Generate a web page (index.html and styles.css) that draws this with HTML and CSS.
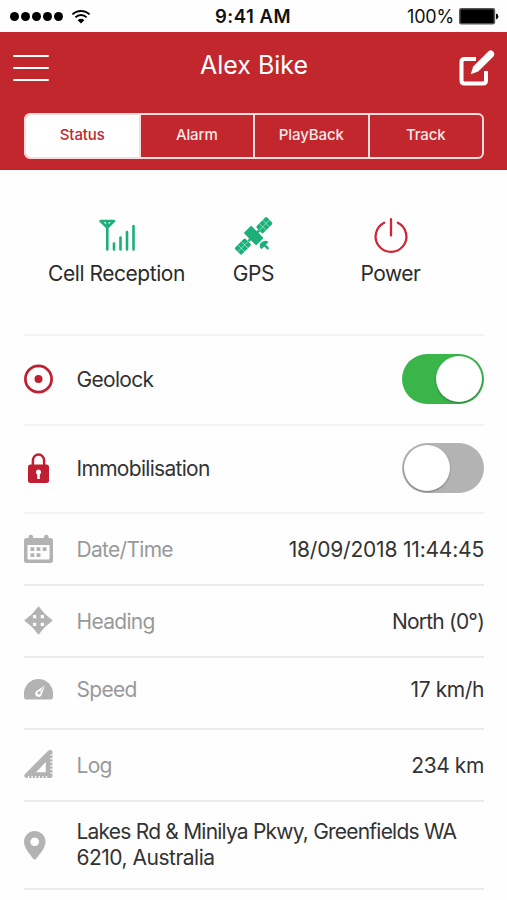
FILE: index.html
```html
<!DOCTYPE html>
<html lang="en">
<head>
    <meta charset="UTF-8">
    <meta name="viewport" content="width=device-width, initial-scale=1.0">
    <title>Alex Bike - Status</title>
    <link rel="stylesheet" href="styles.css">
</head>
<body>
    <div class="statusbar">
        <div class="signal">
            <i></i><i></i><i></i><i></i><i></i>
            <svg class="wifi" width="20" height="15" viewBox="0 0 20 15">
                <path d="M1.4 5.4a12.3 12.3 0 0 1 17.2 0M4.4 8.4a8 8 0 0 1 11.2 0" fill="none" stroke="#000" stroke-width="2"/>
                <path d="M6.7 11.2a4.7 4.7 0 0 1 6.6 0L10 14.6z"/>
            </svg>
        </div>
        <div class="clock">9:41 AM</div>
        <div class="battery">
            <span>100%</span>
            <svg width="40" height="17" viewBox="0 0 40 17">
                <rect x=".8" y=".8" width="34.6" height="15" rx="1.5" fill="#000" stroke="#555" stroke-width="1.6"/>
                <path d="M37 5.6q2.4.7 2.4 2.9T37 11.4z"/>
            </svg>
        </div>
    </div>

    <div class="header">
        <div class="navbar">
            <div class="menu"><span></span><span></span><span></span></div>
            <h1>Alex Bike</h1>
            <svg class="edit" width="36" height="36" viewBox="0 0 36 36">
                <path d="M17 9H5.5Q2.5 9 2.5 12V30.5Q2.5 33.5 5.5 33.5H24Q27 33.5 27 30.5V21" fill="none" stroke="#fff" stroke-width="4"/>
                <path d="M11.7 24.3L14.2 16.5L29.5 1.2Q31.8-.7 34.1 1.5Q36.4 4 34.4 6.4L19.2 21.4z" fill="#fff"/>
            </svg>
        </div>
        <div class="tabs">
            <div class="tab active">Status</div>
            <div class="tab">Alarm</div>
            <div class="tab">PlayBack</div>
            <div class="tab">Track</div>
        </div>
    </div>

    <div class="stats">
        <div class="stat">
            <svg width="36" height="36" viewBox="0 0 36 36" fill="none" stroke="#1bb077" stroke-width="2.6" stroke-linecap="round">
                <path d="M1.6 3H15L8.3 9.5zM8.3 4V31.5" stroke-width="2.6" stroke-linejoin="round"/>
                <path d="M15 25.5V31.500M21.5 19.500V31.500M28 14V31.500M34.5 8V31.500"/>
            </svg>
            <div class="cell">Cell Reception</div>
        </div>
        <div class="stat">
            <svg width="36" height="36" viewBox="0 0 36 36">
                <g transform="rotate(-45 18 17.5)">
                    <rect x="12.5" y="8.500" width="10.500" height="17.500" rx="1" fill="#1bb077"/>
                    <path d="M10 17.500H26" stroke="#1bb077" stroke-width="2.4"/>
                    <g fill="#1bb077">
                        <rect x="-5" y="12.700" width="14.700" height="9.600" rx="1.5"/>
                        <rect x="25.300" y="12.700" width="14.700" height="9.600" rx="1.5"/>
                    </g>
                    <path d="M-5 17.500H9.700M-.1 12.700V22.300M4.800 12.700V22.300M25.300 17.500H40M30.200 12.700V22.300M35.100 12.700V22.300" stroke="#fff" stroke-width=".6" stroke-opacity=".8"/>
                </g>
                <path d="M25.300 31.300Q22.200 27.500 25.300 24.500Q28.700 21.300 32.500 24L29.800 27Q32.800 28 33 30.500L31.500 31.800L28.300 28.400z" fill="#1bb077"/>
            </svg>
            <div class="gps">GPS</div>
        </div>
        <div class="stat">
            <svg width="36" height="36" viewBox="0 0 36 36" fill="none" stroke="#cf2735" stroke-width="2.3" stroke-linecap="round">
                <path d="M18 1.200V17.500M11.200 4.700A15.400 15.400 0 1 0 24.800 4.700"/>
            </svg>
            <div class="power">Power</div>
        </div>
    </div>

    <div class="list">
        <div class="row geolock">
            <svg class="icon" width="30" height="30" viewBox="0 0 30 30">
                <circle cx="14.500" cy="15" r="13.100" fill="none" stroke="#c01f32" stroke-width="2.7"/>
                <circle cx="14.500" cy="15" r="4" fill="#c01f32"/>
            </svg>
            <div class="name">Geolock</div>
            <div class="switch on"><span></span></div>
        </div>
        <div class="row immobilisation">
            <svg class="icon" width="30" height="30" viewBox="0 0 30 30">
                <path d="M8.900 12V7.500a5.600 6 0 0 1 11.200 0V12" fill="none" stroke="#c01f32" stroke-width="2.500"/>
                <rect x="4" y="11.500" width="21" height="18.500" rx="2.500" fill="#c01f32"/>
                <path d="M14.500 16.500a2.700 2.700 0 0 1 1.300 5V26h-2.600v-4.500a2.700 2.700 0 0 1 1.300-5z" fill="#fff"/>
            </svg>
            <div class="name">Immobilisation</div>
            <div class="switch"><span></span></div>
        </div>
        <div class="row muted datetime">
            <svg class="icon" width="30" height="30" viewBox="0 0 30 30" fill="#b3b3b3">
                <path fill-rule="evenodd" d="M2.500 4H4.500V3a2.300 2.300 0 0 1 4.600 0V4H20V3a2.300 2.300 0 0 1 4.600 0V4H26.500Q29 4 29 6.500V26.500Q29 29 26.500 29H2.500Q0 29 0 26.500V6.500Q0 4 2.500 4zM3.500 11V24.500Q3.500 25.500 4.500 25.500H24.500Q25.500 25.500 25.500 24.500V11z"/>
                <path d="M6.500 13.200h3.800v3.800H6.500zM12.600 13.200h3.800v3.800h-3.800zM18.700 13.200h3.800v3.800h-3.800zM6.500 19.200h3.800V23H6.500zM12.600 19.200h3.800V23h-3.800z"/>
            </svg>
            <div class="name">Date/Time</div>
            <div class="value">18/09/2018 11:44:45</div>
        </div>
        <div class="row muted heading">
            <svg class="icon" width="30" height="30" viewBox="0 0 30 30" fill="#b3b3b3">
                <path d="M14.500 .8L20.800 8.500H16.200V12.800H20.500V8.200L28.300 14.500L20.500 20.800V16.200H16.200V20.500H20.800L14.500 28.200L8.200 20.500H12.800V16.200H8.500V20.800L.7 14.500L8.500 8.200V12.800H12.800V8.500H8.200z" stroke="#b3b3b3" stroke-width="1" stroke-linejoin="round"/>
            </svg>
            <div class="name">Heading</div>
            <div class="value">North (0°)</div>
        </div>
        <div class="row muted speed">
            <svg class="icon" width="30" height="30" viewBox="0 0 30 30">
                <path d="M1.800 25.500Q0 25.500 0 22.500V19.500A14.500 14.500 0 0 1 29 19.500V22.500Q29 25.500 27.200 25.500z" fill="#b3b3b3"/>
                <path d="M20.800 11.500L18 19.700A3.400 3.400 0 1 1 12.700 16.800z" fill="#fff"/>
                <circle cx="15" cy="18.800" r="1.600" fill="#b3b3b3"/>
                <path d="M16 17.700L20 12.500" stroke="#b3b3b3" stroke-width=".8"/>
            </svg>
            <div class="name">Speed</div>
            <div class="value">17 km/h</div>
        </div>
        <div class="row muted log">
            <svg class="icon" width="30" height="30" viewBox="0 0 30 30">
                <path fill-rule="evenodd" d="M24.200 .7Q27.800-1.500 28.500 2V25.500Q28.500 28 26 28H2.500Q-1 27.500 .8 24.200zM21.800 12L12 22.300H21.800z" fill="#b3b3b3"/>
                <path d="M26.300 5H29M26.300 8.600H29M26.300 12.200H29M26.300 15.800H29M26.300 19.400H29M26.300 23H29M4.500 26V28.500M8.100 26V28.500M11.700 26V28.500M15.300 26V28.500M18.900 26V28.500M22.500 26V28.500" stroke="#fff" stroke-width="1.200"/>
            </svg>
            <div class="name">Log</div>
            <div class="value">234 km</div>
        </div>
        <div class="row address">
            <svg class="icon" width="30" height="30" viewBox="0 0 30 30">
                <path fill-rule="evenodd" d="M10.700 1A10.700 10.700 0 0 1 21.500 11.700C21.500 18 16 23.500 12.600 28.200Q10.700 30.700 8.800 28.200C5.500 23.500 0 18 0 11.700A10.700 10.700 0 0 1 10.700 1zM10.700 7.500a4.300 4.300 0 1 0 .01 0z" fill="#b3b3b3"/>
            </svg>
            <div class="name">Lakes Rd &amp; Minilya Pkwy, Greenfields WA<br><span>6210, Australia</span></div>
        </div>
    </div>
</body>
</html>
```
FILE: styles.css
```css
* { box-sizing: border-box; }
body { font-family: Inter, sans-serif; background: #fefefe; color: #333; margin: 0; padding: 0; height: 900px; overflow: hidden; }
svg { display: block; overflow: visible; }

.statusbar { display: grid; grid-template-columns: 1fr auto 1fr; align-items: center; height: 32px; padding: 0 8px 0 10px; color: #111; font-size: 18px; }
.signal { display: flex; align-items: center; gap: 2px; }
.signal i { width: 9px; height: 9px; border-radius: 50%; background: #000; }
.wifi { margin-left: 6px; }
.clock { font-size: 18.5px; font-weight: 600; letter-spacing: 0.5px; margin-right: 3px; }
.battery { display: flex; justify-content: flex-end; align-items: center; gap: 5px; letter-spacing: -0.2px; }

.header { background: #c1272d; height: 138px; padding-top: 1px; }
.navbar { display: flex; justify-content: space-between; align-items: center; height: 69px; padding: 0 12px 0 13px; }
.menu { width: 36px; display: flex; flex-direction: column; gap: 10px; }
.menu span { height: 2px; border-radius: 1px; background: #fff; }
h1 { margin: 0; padding-bottom: 5px; font-size: 25px; font-weight: 400; letter-spacing: 0; color: #fff; }
.tabs { display: flex; height: 46px; margin: 11px 23px 0 24px; border: 2px solid #f7dcdd; border-radius: 6px; overflow: hidden; }
.tab { flex: 1; display: flex; align-items: center; justify-content: center; padding-bottom: 3px; font-size: 15px; font-weight: 500; letter-spacing: -0.1px; color: #fbe9e9; border-left: 2px solid #f7dcdd; }
.tab.active { background: #fff; color: #c1272d; border-left: none; }

.stats { display: grid; grid-template-columns: repeat(3, 137px); justify-content: center; height: 164px; padding-top: 48px; font-size: 21px; color: #2b2b2b; }
.stat { display: flex; flex-direction: column; align-items: center; gap: 7px; line-height: 26px; white-space: nowrap; }
.cell { letter-spacing: -0.45px; }
.gps { letter-spacing: -0.4px; }
.power { letter-spacing: -0.5px; }

.list { margin: 0 23px 0 24px; font-size: 21px; border-bottom: 2px solid #ebebeb; }
.row { display: flex; align-items: center; border-top: 2px solid #ebebeb; height: 72px; }
.geolock { height: 90px; border-color: #f2f2f2; padding-bottom: 2px; }
.immobilisation { height: 88px; border-color: #f2f2f2; padding-bottom: 2px; }
.datetime { border-color: #f2f2f2; }
.speed { padding-bottom: 8px; }
.address { height: 88px; padding-bottom: 1px; }
.icon { flex: none; margin-right: 22.5px; }
.name { flex: 1; white-space: nowrap; letter-spacing: -0.7px; }
.muted .name { color: #999; }
.value { letter-spacing: -0.4px; }
.datetime .value { letter-spacing: -0.2px; }
.heading .value { letter-spacing: -0.8px; }
.address .name { line-height: 26px; letter-spacing: -0.79px; }
.address .name span { letter-spacing: -0.5px; }

.switch { width: 82px; height: 50px; border-radius: 25px; background: #b3b3b3; padding: 2px; display: flex; align-items: center; }
.switch span { width: 46px; height: 46px; border-radius: 50%; background: #fff; box-shadow: 0 1px 2px rgba(0,0,0,0.35); }
.switch.on { background: #39b54a; justify-content: flex-end; }
```
